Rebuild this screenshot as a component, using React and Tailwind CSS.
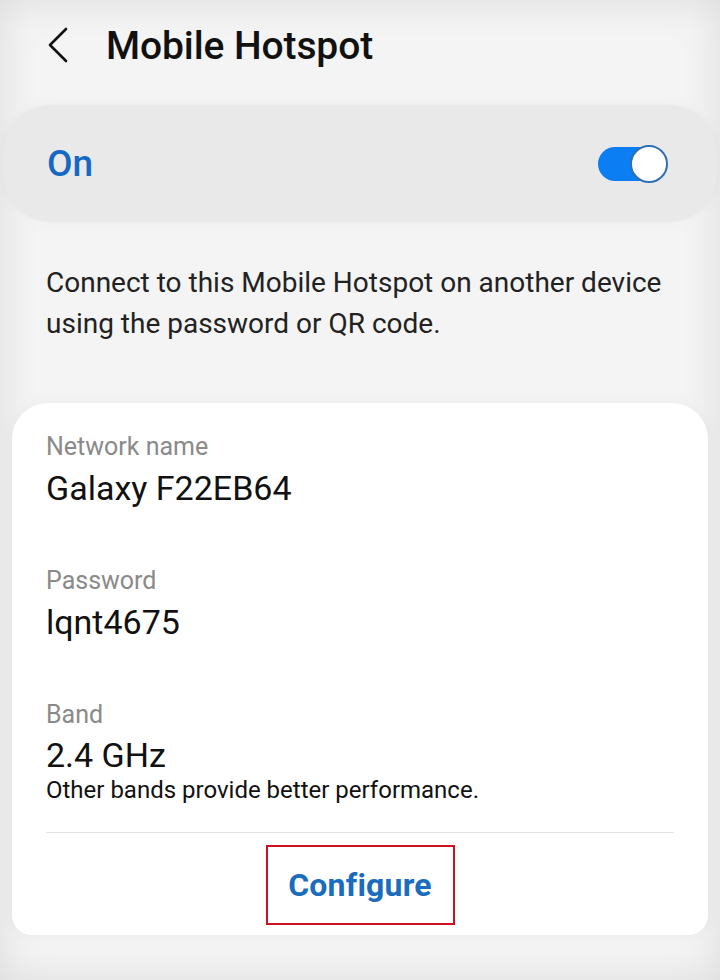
export default function App() {
  return (
    <div
      className="w-[720px] h-[980px] bg-[#f4f4f4] shadow-[inset_0_0_40px_rgba(0,0,0,0.10)] overflow-hidden"
      style={{ fontFamily: "Roboto, 'Noto Sans', sans-serif" }}
    >
      {/* header */}
      <div className="flex items-center h-[92px] pl-[46px]">
        <svg width="24" height="36" viewBox="0 0 24 36" className="mb-[2px]">
          <path d="M20 2 L4 18 L20 34" fill="none" stroke="#111" strokeWidth="2.6" strokeLinecap="round" strokeLinejoin="round" />
        </svg>
        <h1 className="ml-[36px] text-[39px] font-medium text-[#111] tracking-[-0.1px]">Mobile Hotspot</h1>
      </div>

      {/* on switch */}
      <div className="mx-[3px] mt-[13px] h-[117px] rounded-[48px] bg-[#e9e9e9] flex items-center justify-between pl-[44px] pr-[49px] shadow-[0_0_10px_rgba(0,0,0,0.04)]">
        <span className="text-[37px] font-medium text-[#1469c4]">On</span>
        <div className="relative w-[70px] h-[38px]">
          <div className="absolute left-0 top-[2px] w-[60px] h-[34px] rounded-full bg-[#0a7ef2]" />
          <div className="absolute right-0 top-0 w-[38px] h-[38px] rounded-full bg-white border-2 border-[#2f6fb3]" />
        </div>
      </div>

      {/* description */}
      <p className="mt-[40px] px-[46px] text-[28px] leading-[41px] text-[#222]">
        Connect to this Mobile Hotspot on another device using the password or QR code.
      </p>

      {/* details card */}
      <div className="mt-[59px] mx-[12px] rounded-t-[36px] rounded-b-[20px] bg-white pt-[29px] shadow-[0_0_16px_rgba(0,0,0,0.04)]">
        <div className="px-[34px]">
          <div className="text-[25px] text-[#8a8a8a] leading-[30px]">Network name</div>
          <div className="mt-[6px] text-[34px] text-[#111] leading-[40px]">Galaxy F22EB64</div>

          <div className="mt-[58px] text-[25px] text-[#8a8a8a] leading-[30px]">Password</div>
          <div className="mt-[6px] text-[34px] text-[#111] leading-[40px]">lqnt4675</div>

          <div className="mt-[58px] text-[25px] text-[#8a8a8a] leading-[30px]">Band</div>
          <div className="mt-[7px] text-[34px] text-[#111] leading-[36px]">2.4 GHz</div>
          <div className="mt-[2px] text-[24px] text-[#111] leading-[30px]">Other bands provide better performance.</div>

          <div className="mt-[27px] border-t border-[#e2e2e2]" />
        </div>

        <div className="flex justify-center pt-[12px] pb-[10px]">
          <div className="w-[189px] h-[80px] border-2 border-[#cf1020] flex items-center justify-center">
            <span className="text-[32px] font-bold text-[#1a6cbf] tracking-[0.2px]">Configure</span>
          </div>
        </div>
      </div>
    </div>
  );
}
